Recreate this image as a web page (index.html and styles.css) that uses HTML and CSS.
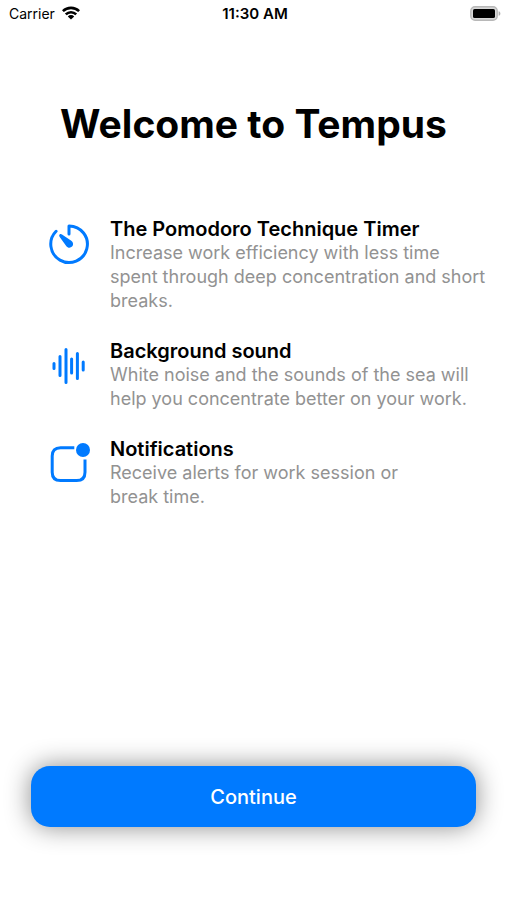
FILE: index.html
```html
<!DOCTYPE html>
<html lang="en">
<head>
<meta charset="utf-8">
<meta name="viewport" content="width=device-width, initial-scale=1">
<title>Tempus</title>
<link rel="stylesheet" href="styles.css">
</head>
<body>
<div class="screen">
  <header class="status">
    <div class="carrier">
      <span>Carrier</span>
      <svg class="wifi" viewBox="0 0 18 14" aria-hidden="true">
        <g fill="none" stroke="#000" stroke-width="2.6">
          <path d="M.9 5.2a11.5 11.5 0 0 1 16.2 0"/>
          <path d="M3.8 8.4a7.4 7.4 0 0 1 10.4 0"/>
        </g>
        <path d="M9 13.6 5.8 10.4a4.6 4.6 0 0 1 6.4 0z"/>
      </svg>
    </div>
    <time class="clock">11:30 AM</time>
    <svg class="battery" viewBox="0 0 31 15" aria-hidden="true">
      <rect x=".8" y=".8" width="26.4" height="13.4" rx="4.2" fill="#d8d8d8" stroke="#b8b8b8" stroke-width="1.4"/>
      <rect x="3" y="3" width="22" height="9" rx="1.6"/>
      <path d="M28.6 5.2c2.4.6 2.4 4 0 4.6z" fill="#b0b0b0"/>
    </svg>
  </header>
  <main class="content">
    <h1>Welcome to Tempus</h1>
    <ul class="features">
      <li>
        <svg class="icon" viewBox="0 0 42 42" aria-hidden="true">
          <path d="M21 11V2.900A18.300 18.300 0 1 1 8.100 8.300" fill="none" stroke="#007aff" stroke-width="3" stroke-linecap="round" stroke-linejoin="round"/>
          <path d="M11.600 11.600c.7-.7 1.600-.6 2.400 0l9.300 6.200c2.100 1.600 2.400 4.200.8 5.800-1.700 1.700-4.400 1.500-5.900-.6l-6.500-9.100c-.6-.8-.7-1.700-.1-2.300z" fill="#007aff"/>
        </svg>
        <div>
          <h2>The Pomodoro Technique Timer</h2>
          <p>Increase work efficiency with less time<br>spent through deep concentration and short<br>breaks.</p>
        </div>
      </li>
      <li>
        <svg class="icon" viewBox="0 0 42 42" aria-hidden="true">
          <path d="M6 18.500v5M12 11.500v19M18 4.500v33M23.600 14v14M29.400 8.500v25M35.200 17v8" fill="none" stroke="#007aff" stroke-width="3" stroke-linecap="round"/>
        </svg>
        <div>
          <h2>Background sound</h2>
          <p>White noise and the sounds of the sea will<br>help you concentrate better on your work.</p>
        </div>
      </li>
      <li>
        <svg class="icon" viewBox="0 0 42 42" aria-hidden="true">
          <path d="M26.300 4.800H12.500Q4.200 4.800 4.200 13.100V29.300Q4.200 37.600 12.500 37.600H28.700Q37 37.600 37 29.300V16.500" fill="none" stroke="#007aff" stroke-width="3"/>
          <circle cx="35" cy="7" r="7" fill="#007aff"/>
        </svg>
        <div>
          <h2>Notifications</h2>
          <p>Receive alerts for work session or<br>break time.</p>
        </div>
      </li>
    </ul>
  </main>
  <footer class="actions">
    <button type="button">Continue</button>
  </footer>
</div>
</body>
</html>
```
FILE: styles.css
```css
* {
  box-sizing: border-box;
}

body {
  margin: 0;
  background: #fff;
  color: #000;
  font-family: Inter, "Liberation Sans", sans-serif;
}

.screen {
  display: flex;
  flex-direction: column;
  min-height: 100vh;
}

.status {
  display: grid;
  grid-template-columns: 1fr auto 1fr;
  align-items: center;
  height: 26px;
  padding: 0 6px 0 9px;
  font-size: 14px;
}

.carrier {
  display: flex;
  align-items: center;
  gap: 7px;
}

.wifi {
  width: 18px;
  height: 14px;
}

.clock {
  font-size: 15px;
  font-weight: 600;
}

.battery {
  justify-self: end;
  width: 31px;
  height: 15px;
}

.content {
  flex: 1;
}

h1 {
  margin: 74px 0 0;
  font-size: 39px;
  line-height: 48px;
  font-weight: 700;
  text-align: center;
}

.features {
  display: flex;
  flex-direction: column;
  gap: 26px;
  margin: 69px 0 0;
  padding: 0 16px 0 48px;
  list-style: none;
}

.features li {
  display: flex;
  gap: 20px;
}

.icon {
  flex: none;
  width: 42px;
  height: 42px;
  margin-top: 6px;
  overflow: visible;
}

h2 {
  margin: 0;
  font-size: 20px;
  line-height: 24px;
  font-weight: 600;
}

p {
  margin: 0;
  color: #929292;
  font-size: 18px;
  line-height: 24px;
}

.actions {
  padding: 0 31px 73px;
}

button {
  display: block;
  width: 100%;
  height: 61px;
  border: 0;
  border-radius: 19px;
  background: #007aff;
  box-shadow: 0 0 26px rgba(0, 0, 0, 0.46);
  color: #fff;
  font: 500 20px/24px Inter, "Liberation Sans", sans-serif;
}
```
